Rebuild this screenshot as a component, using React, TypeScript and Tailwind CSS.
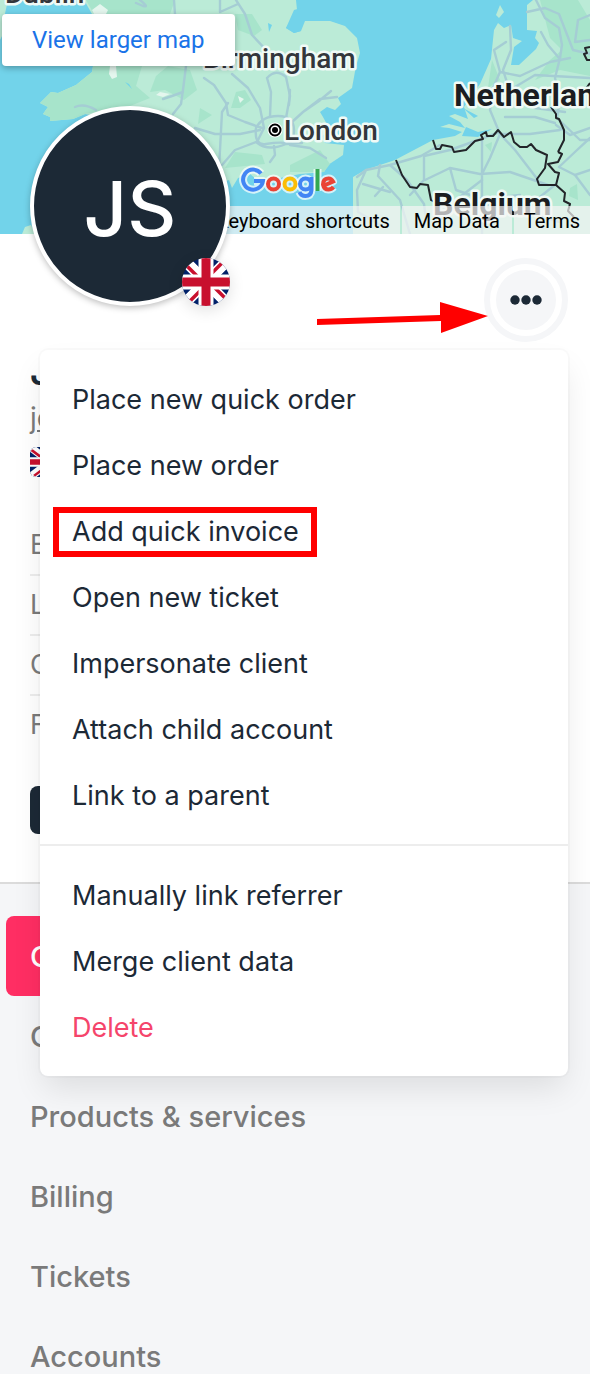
import { clsx } from "clsx";

type MenuItem = {
  label: string;
  danger?: boolean;
  highlighted?: boolean;
};

const menuGroups: MenuItem[][] = [
  [
    { label: "Place new quick order" },
    { label: "Place new order" },
    { label: "Add quick invoice", highlighted: true },
    { label: "Open new ticket" },
    { label: "Impersonate client" },
    { label: "Attach child account" },
    { label: "Link to a parent" },
  ],
  [
    { label: "Manually link referrer" },
    { label: "Merge client data" },
    { label: "Delete", danger: true },
  ],
];

const details = ["E", "L", "C", "F"];

const navItems = [
  { label: "O", active: true },
  { label: "O" },
  { label: "Products & services" },
  { label: "Billing" },
  { label: "Tickets" },
  { label: "Accounts" },
];

const roads = [
  "M140 0Q150 8 143 6L136 3M174 0L175 14M220 0V12L238 4M236 0L245 14 252 35 268 52",
  "M186 66L183 90 181 104 173 114M163 99L172 96 183 92M75 107Q84 103 96 110",
  "M204 78L214 85 226 103 228 115 245 122 262 128M228 103L222 112 220 150 219 168",
  "M232 74L248 88 260 108 264 128 258 140M267 78Q276 68 286 77L290 96 286 118 292 124M267 78L271 92 270 116",
  "M195 128L215 134 240 134 260 130M222 165L235 150 256 142Q268 152 286 144L302 143",
  "M256 128Q262 116 278 116T294 130 286 143 266 144 256 128M274 146L275 155 270 162",
  "M292 122L303 112 319 101 331 91M303 112L320 99 337 97M290 145L310 148 326 158M290 90L289 105",
  "M357 177L366 170 390 165 421 156 440 145M366 170L357 190 358 212M363 184L390 192M375 196L383 187",
  "M390 165L407 180 424 204 426 220M424 155L424 180 410 195M424 156L450 150 478 140 500 132",
  "M425 180L450 168 480 174 510 172 548 185M450 168L456 190 482 199 520 195M482 138L482 234",
  "M482 180L456 200 440 220M482 199L500 215 530 205 556 184M500 134L490 158 482 174",
  "M500 134L515 150 538 180M500 134L530 134 560 130M490 110L500 134M490 110L493 88 500 72 494 50 506 42",
  "M500 72L520 76 550 62 570 58M493 88L515 87 535 75 590 78M510 26L511 50 503 70 512 98",
  "M527 12L545 8 559 14 573 50 590 54M536 0L545 18 559 28 562 45 560 58M590 15L578 20 575 42 590 40",
  "M559 58L548 45 541 32M560 58L555 78 560 98 557 118 580 140 590 140M556 125L570 135 590 128",
  "M559 167L576 151 590 138M559 167L575 175 590 170M505 117L535 117 555 123M520 98L535 108 565 112",
  "M380 165L378 176 400 200 410 234M358 212L382 226M575 175L590 195M530 205L545 218 560 222",
];

const borders = [
  "M433 140L436 149 440 149 442 145 452 147 454 152 466 150 475 141 483 139 481 135 486 132 487 136 493 136 498 130 504 137 511 132 514 142 520 147 527 147 531 144 536 150 547 155 545 168 537 179 539 185 556 185 559 173 555 172 548 164 558 162 562 154 558 152",
  "M551 107L556 114 556 118 559 119 564 130 564 140 558 152",
  "M396 160L402 175 410 187 417 188 420 184 428 185 431 200 438 204",
  "M556 185L565 193 564 201 570 204 568 211 574 217M590 47L585 48 587 53 584 54 587 60 590 60M590 83L585 90",
];

function MapCanvas() {
  return (
    <svg
      className="absolute inset-0 h-full w-full"
      viewBox="0 0 590 234"
      preserveAspectRatio="xMinYMin slice"
      aria-hidden="true"
    >
      <rect width="590" height="234" fill="#72d3ea" />
      {/* land */}
      <g fill="#bbebd7">
        <path d="M0 0H8L4 18 5 30 0 40Z" />
        <path d="M93 66L92 72 76 85 58 93 51 92 40 103 48 107 43 114 50 117 50 121 73 119 85 114 100 117 120 130 200 190 229 180 232 188 238 178 250 174 262 184 280 178 300 174 324 172 328 165 343 155 344 145 325 143 322 136 330 130 323 117 320 112 327 107 335 110 341 104 338 98 352 88 356 66 360 53 357 38 345 26 330 21 305 21 301 31 294 33 286 28 294 17 297 10 296 0H84L92 14 94 50Z" />
        <path d="M353 234V177L365 170 395 160 433 140 455 136 462 132 449 128 440 127 449 124 465 128 460 122 449 116 455 114 468 119 464 107 480 84 491 59 494 30 498 23 504 28 511 25 513 38 522 41 514 47 511 65 519 65 536 49 539 43 535 38 537 31 527 30V5L533 0H590V234Z" />
        <path d="M500 5L504 12 499 18 496 15Z" />
        <path d="M22 234L25 227 31 225 36 234Z" />
      </g>
      {/* forests and high ground */}
      <g fill="#a7e4cb">
        <path d="M93 66L92 72 76 85 58 93 51 92 40 103 48 107 43 114 50 117 50 121 73 119 85 114 130 106 150 98 136 86 142 66Z" />
        <path d="M86 0L94 14 110 16 170 14 175 0ZM235 14L252 14 262 30 254 36 238 30ZM168 66L190 70 197 90 184 100 165 90 150 92 156 76Z" />
        <path d="M236 92L245 90 251 100 240 108 231 108ZM235 152L262 155 265 164 225 168ZM290 165L320 150 330 164 324 172 290 172ZM200 108L212 115 198 124Z" />
        <path d="M540 0L578 0 590 20V76L560 70 535 80 550 60 562 50 550 38ZM570 188L577 184 578 200 569 196ZM492 60L500 80 488 88ZM485 145L492 142 491 152Z" />
      </g>
      <g fill="#e4f6ee">
        <path d="M110 66L116 66 117 77 112 79 109 74ZM156 95L160 92 170 94 163 97ZM238 96L244 99 240 103ZM92 10L100 4 108 10 106 14H94Z" />
      </g>
      <path d="M268 23L272 25 269 32ZM125 82L129 84 132 89ZM294 10L301 8 301 31 294 33 286 28Z" fill="#72d3ea" />
      <path d="M463 108L478 116 474 118ZM466 127L478 132 492 129 478 137 462 136Z" fill="#72d3ea" />
      <g fill="none" stroke="#a5cdd4" strokeWidth="2.4" strokeLinejoin="round" strokeLinecap="round">
        {roads.map((d) => (
          <path key={d} d={d} />
        ))}
      </g>
      <g fill="none" stroke="#222529" strokeWidth="2" strokeLinejoin="round">
        {borders.map((d) => (
          <path key={d} d={d} />
        ))}
      </g>
      {/* place names */}
      <g
        fontFamily="Roboto, sans-serif"
        fontWeight="500"
        fontSize="28"
        fill="#33363b"
        stroke="#f0faf6"
        strokeWidth="5"
        strokeLinejoin="round"
        paintOrder="stroke"
      >
        <text x="5" y="3">Dublin</text>
        <text x="203" y="68">Birmingham</text>
        <text x="284" y="140">London</text>
        <g fontWeight="700" fontSize="32" fill="#1b1d21">
          <text x="454" y="106">Netherlands</text>
          <text x="433" y="215">Belgium</text>
        </g>
      </g>
      <circle cx="275" cy="130" r="7.5" fill="#fff" />
      <circle cx="275" cy="130" r="5.5" fill="#fff" stroke="#000" strokeWidth="2" />
      <circle cx="275" cy="130" r="3" fill="#000" />
      {/* wordmark */}
      <g fill="none" stroke="#fff" strokeOpacity=".7" strokeWidth="8" strokeLinejoin="round">
        <GoogleMark plain />
      </g>
      <g fill="none" strokeWidth="4">
        <GoogleMark />
      </g>
    </svg>
  );
}

function GoogleMark({ plain }: { plain?: boolean }) {
  const tint = (color: string) => (plain ? undefined : color);
  return (
    <>
      <path stroke={tint("#4285f4")} d="M261 173.5A10 10 0 1 0 263 181H254" />
      <circle stroke={tint("#ea4335")} cx="273.5" cy="184" r="5.5" />
      <circle stroke={tint("#fbbc05")} cx="290" cy="184" r="5.5" />
      <path stroke={tint("#4285f4")} d="M311 184A5.5 5.5 0 1 0 300 184A5.5 5.5 0 1 0 311 184M311.5 177V190Q311 196 305.5 196Q301 196 299.5 192" />
      <path stroke={tint("#34a853")} d="M317.5 169V191" />
      <path stroke={tint("#ea4335")} d="M323 186L333 181.5Q331 178 328 178.5Q323 179 323 184.5Q324 189.5 328.5 189.5Q331.5 189.5 333.5 187" />
    </>
  );
}

function UnionJack({ className }: { className?: string }) {
  return (
    <svg className={className} viewBox="0 0 48 48" preserveAspectRatio="none" role="img" aria-label="United Kingdom">
      <rect width="48" height="48" fill="#012169" />
      <path d="M-2 -2L50 50M50 -2L-2 50" stroke="#fff" strokeWidth="11" />
      <path d="M2 5L20 23M46 43L28 25M43 2L25 20M5 46L23 28" stroke="#c8102e" strokeWidth="3.5" />
      <path d="M24 0V48M0 24H48" stroke="#fff" strokeWidth="15" />
      <path d="M24 0V48M0 24H48" stroke="#c8102e" strokeWidth="9" />
    </svg>
  );
}

function ActionsMenu() {
  return (
    <div
      role="menu"
      className="absolute top-[350px] right-[22px] left-10 rounded-lg bg-white text-[27px] leading-[34px] text-[#1c2936] shadow-[0_0_0_2px_rgba(10,10,10,0.02),0_16px_32px_-4px_rgba(10,10,10,0.1)]"
    >
      {menuGroups.map((group, index) => (
        <div key={index} className={clsx("py-4", index > 0 && "border-t-2 border-[#ededed]")}>
          {group.map((item) => (
            <button
              key={item.label}
              type="button"
              role="menuitem"
              className={clsx(
                "relative block w-full px-8 pt-[17px] pb-[15px] text-left",
                item.danger && "text-[#f5456b]"
              )}
            >
              {item.label}
              {item.highlighted && (
                <span className="absolute top-[9px] left-[13px] h-[50px] w-[264px] border-6 border-[#ff0000]" />
              )}
            </button>
          ))}
        </div>
      ))}
    </div>
  );
}

export default function App() {
  return (
    <div className="relative min-h-screen overflow-hidden bg-[#f5f6f8] font-['Inter',sans-serif] text-[#7a7a7a]">
      <header className="relative flex h-[234px] flex-col items-start justify-between overflow-hidden font-['Roboto',sans-serif]">
        <MapCanvas />
        <a
          href="#map"
          className="relative mt-3.5 ml-0.5 rounded-sm bg-white px-[30px] text-2xl leading-[52px] text-[#1a73e8] shadow-[0_2px_6px_rgba(0,0,0,0.3)]"
        >
          View larger map
        </a>
        <div className="relative flex gap-0.5 self-end text-xl leading-[26px] text-black">
          <button type="button" className="bg-[#f5f5f5]/70 px-2.5 pt-0.5">Keyboard shortcuts</button>
          <a href="#data" className="bg-[#f5f5f5]/70 px-3 pt-0.5">Map Data</a>
          <a href="#terms" className="bg-[#f5f5f5]/70 px-2.5 pt-0.5">Terms</a>
        </div>
      </header>

      <section className="border-b-2 border-[#dbdbdb] bg-white px-[30px] pb-12">
        <div className="-mr-2 flex items-start justify-between">
          <div className="relative -mt-32 flex size-[200px] items-center justify-center rounded-full border-4 border-white bg-[#1c2936] pt-1 text-[76px] leading-none font-medium text-white shadow-[0_2px_6px_rgba(0,0,0,0.25)]">
            JS
            <UnionJack className="absolute -right-1 -bottom-1 size-12 rounded-full shadow-[0_4px_16px_rgba(0,0,0,0.12)]" />
          </div>
          <button
            type="button"
            aria-label="More actions"
            className="mt-6 flex size-[84px] items-center justify-center rounded-full border-6 border-[#f5f6f8] bg-white p-1.5"
          >
            <span className="flex size-full items-center justify-center rounded-full bg-[#f5f6f8]">
              <svg className="h-3 w-8" viewBox="0 0 32 12" fill="#1c2936" aria-hidden="true">
                <circle cx="5" cy="6" r="4.7" />
                <circle cx="16" cy="6" r="4.7" />
                <circle cx="27" cy="6" r="4.7" />
              </svg>
            </span>
          </button>
        </div>

        <h1 className="mt-2.5 text-4xl leading-10 font-semibold text-[#1c2936]">J</h1>
        <p className="mt-2 text-[28px] leading-9">
          <a href="#email" className="underline">jo</a>
        </p>
        <UnionJack className="mt-[11px] h-[30px] w-10 rounded-md" />

        <ul className="mt-[39px] text-[27px] leading-[58px]">
          {details.map((detail) => (
            <li key={detail} className="border-b-2 border-[#ededed] last:border-transparent">
              {detail}
            </li>
          ))}
        </ul>
        <button type="button" aria-label="Edit" className="mt-[30px] block h-12 w-40 rounded-lg bg-[#1c2936]" />
      </section>

      <nav className="flex flex-col pt-8 pr-[30px] pl-1.5 text-[29px] leading-[78px] font-medium">
        {navItems.map((item, index) => (
          <a
            key={index}
            href="#section"
            className={clsx("rounded-lg px-6 pt-0.5", item.active && "bg-[#ff2e63] text-white")}
          >
            {item.label}
          </a>
        ))}
      </nav>

      <ActionsMenu />

      {/* pointer to the actions button */}
      <svg className="absolute top-[300px] right-[102px] h-9 w-[171px]" viewBox="0 0 171 36" aria-hidden="true">
        <path d="M0 19L123 15V2L171 16L124 33V21L0 25Z" fill="#ff0000" />
      </svg>
    </div>
  );
}
